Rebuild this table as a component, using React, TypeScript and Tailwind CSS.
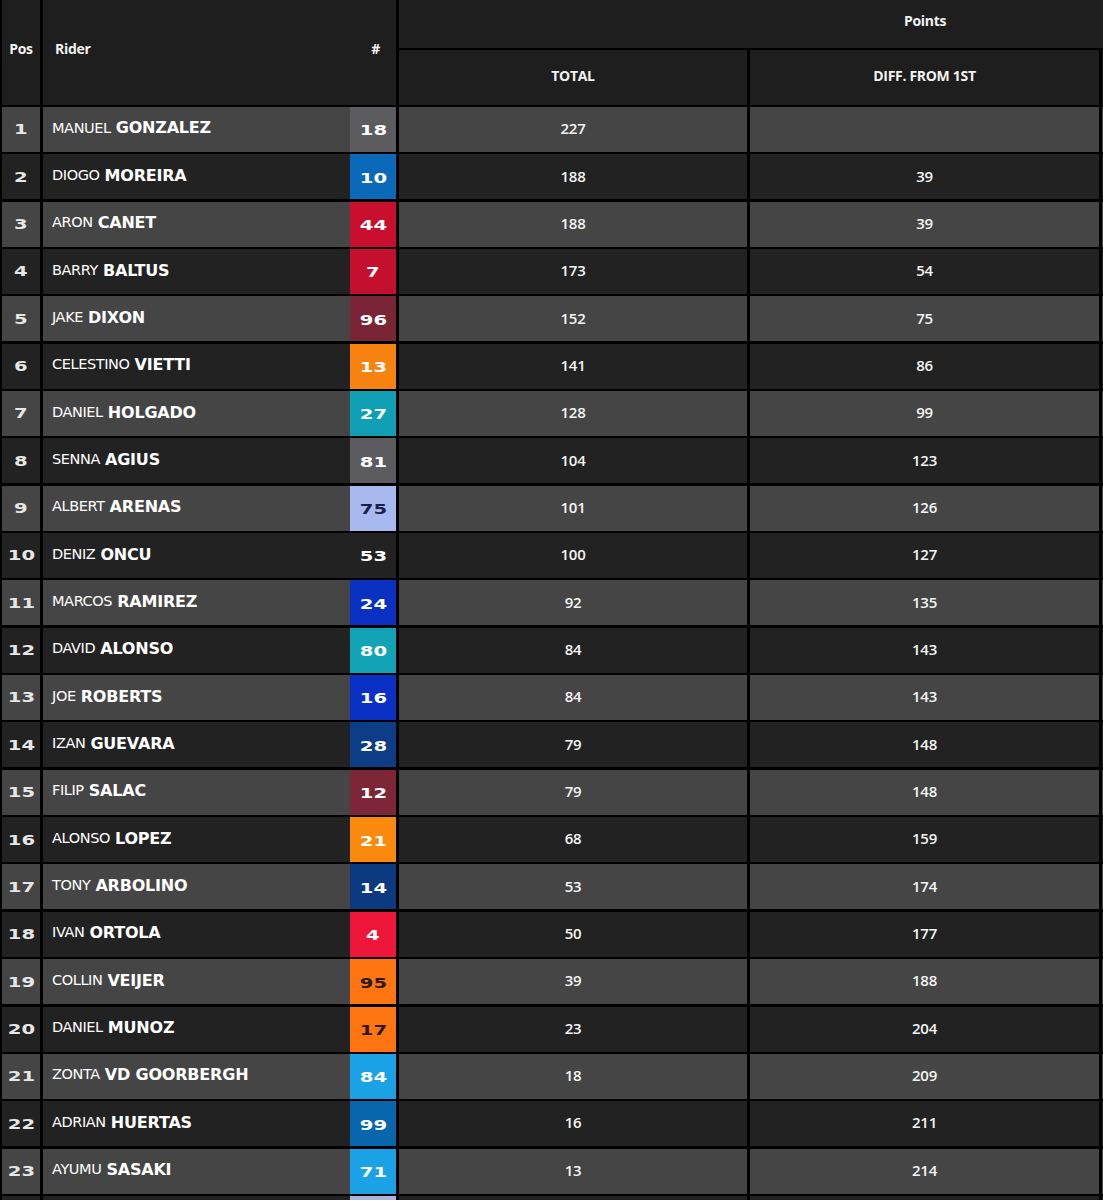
const riders = [
  { pos: 1, first: "MANUEL", last: "GONZALEZ", num: "18", box: "bg-[#5b5b60]", ink: "text-white", total: 227, diff: "" },
  { pos: 2, first: "DIOGO", last: "MOREIRA", num: "10", box: "bg-[#0a69b8]", ink: "text-white", total: 188, diff: "39" },
  { pos: 3, first: "ARON", last: "CANET", num: "44", box: "bg-[#c8102e]", ink: "text-white", total: 188, diff: "39" },
  { pos: 4, first: "BARRY", last: "BALTUS", num: "7", box: "bg-[#c40f2e]", ink: "text-white", total: 173, diff: "54" },
  { pos: 5, first: "JAKE", last: "DIXON", num: "96", box: "bg-[#7a2535]", ink: "text-white", total: 152, diff: "75" },
  { pos: 6, first: "CELESTINO", last: "VIETTI", num: "13", box: "bg-[#f8820f]", ink: "text-white", total: 141, diff: "86" },
  { pos: 7, first: "DANIEL", last: "HOLGADO", num: "27", box: "bg-[#0fa0b5]", ink: "text-white", total: 128, diff: "99" },
  { pos: 8, first: "SENNA", last: "AGIUS", num: "81", box: "bg-[#5c5c60]", ink: "text-white", total: 104, diff: "123" },
  { pos: 9, first: "ALBERT", last: "ARENAS", num: "75", box: "bg-[#a8b9f0]", ink: "text-[#18214a]", total: 101, diff: "126" },
  { pos: 10, first: "DENIZ", last: "ONCU", num: "53", box: "", ink: "text-white", total: 100, diff: "127" },
  { pos: 11, first: "MARCOS", last: "RAMIREZ", num: "24", box: "bg-[#0a31c2]", ink: "text-white", total: 92, diff: "135" },
  { pos: 12, first: "DAVID", last: "ALONSO", num: "80", box: "bg-[#13a3b7]", ink: "text-white", total: 84, diff: "143" },
  { pos: 13, first: "JOE", last: "ROBERTS", num: "16", box: "bg-[#0b30c4]", ink: "text-white", total: 84, diff: "143" },
  { pos: 14, first: "IZAN", last: "GUEVARA", num: "28", box: "bg-[#0c3d86]", ink: "text-white", total: 79, diff: "148" },
  { pos: 15, first: "FILIP", last: "SALAC", num: "12", box: "bg-[#7c2637]", ink: "text-white", total: 79, diff: "148" },
  { pos: 16, first: "ALONSO", last: "LOPEZ", num: "21", box: "bg-[#fa8a0e]", ink: "text-white", total: 68, diff: "159" },
  { pos: 17, first: "TONY", last: "ARBOLINO", num: "14", box: "bg-[#0b3a80]", ink: "text-white", total: 53, diff: "174" },
  { pos: 18, first: "IVAN", last: "ORTOLA", num: "4", box: "bg-[#ee1639]", ink: "text-white", total: 50, diff: "177" },
  { pos: 19, first: "COLLIN", last: "VEIJER", num: "95", box: "bg-[#ff7512]", ink: "text-[#2a1a12]", total: 39, diff: "188" },
  { pos: 20, first: "DANIEL", last: "MUNOZ", num: "17", box: "bg-[#ff7512]", ink: "text-[#2a1a12]", total: 23, diff: "204" },
  { pos: 21, first: "ZONTA", last: "VD GOORBERGH", num: "84", box: "bg-[#1ba2e6]", ink: "text-white", total: 18, diff: "209" },
  { pos: 22, first: "ADRIAN", last: "HUERTAS", num: "99", box: "bg-[#0866ad]", ink: "text-white", total: 16, diff: "211" },
  { pos: 23, first: "AYUMU", last: "SASAKI", num: "71", box: "bg-[#1ba2e6]", ink: "text-white", total: 13, diff: "214" },
];

const head = "font-['Open_Sans',sans-serif] font-bold text-[14px] tracking-[-0.3px] text-[#f2f2f2]";
const wide = "inline-block font-['DejaVu_Sans',sans-serif] font-bold text-[13.5px] scale-x-[1.45]";
const pts = "font-['Open_Sans',sans-serif] font-semibold text-[15px] tracking-[-0.3px] text-[#f4f4f4]";

export default function App() {
  return (
    <div className="min-h-screen w-full overflow-hidden bg-black">
      {/* the points group runs on past the window's right edge */}
      <div className="grid w-[1460px] grid-cols-[38px_353px_348px_349px_349px] gap-x-[3px] gap-y-[2.35px] pl-[2px]">
        <div className={`row-span-2 flex items-center justify-center bg-[#1e1e1e] pb-2 ${head}`}>Pos</div>
        <div className={`row-span-2 flex items-center justify-between bg-[#1e1e1e] pb-2 pl-[12px] pr-[16px] ${head}`}>
          <span>Rider</span>
          <span>#</span>
        </div>
        <div className={`col-span-3 flex h-[48px] items-center justify-center bg-[#1e1e1e] pb-2 ${head}`}>Points</div>
        <div className={`flex h-[54.3px] items-center justify-center bg-[#1e1e1e] pb-1 ${head}`}>TOTAL</div>
        <div className={`flex h-[54.3px] items-center justify-center bg-[#1e1e1e] pb-1 ${head}`}>DIFF. FROM 1ST</div>
        <div className="h-[54.3px] bg-[#1e1e1e]" />

        {riders.map((r, i) => {
          const bg = i % 2 === 0 ? "bg-[#454545]" : "bg-[#222222]";
          return (
            <div key={r.pos} className="contents">
              <div className={`flex h-[45px] items-center justify-center ${bg}`}>
                <span className={`${wide} text-[#e6e6e6]`}>{r.pos}</span>
              </div>
              <div className={`flex h-[45px] items-stretch ${bg}`}>
                <div className="flex flex-1 items-center gap-[5px] pl-[9px] pb-[2px] text-white">
                  <span className="font-['DejaVu_Sans',sans-serif] text-[14.5px] tracking-[-0.4px]">{r.first}</span>
                  <span className="font-['DejaVu_Sans',sans-serif] text-[16px] font-bold tracking-[-0.2px]">{r.last}</span>
                </div>
                <div className={`flex w-[46px] items-center justify-center pt-[2px] ${r.box}`}>
                  <span className={`${wide} ${r.ink}`}>{r.num}</span>
                </div>
              </div>
              <div className={`flex h-[45px] items-center justify-center pb-[2px] ${bg} ${pts}`}>{r.total}</div>
              <div className={`flex h-[45px] items-center justify-center pb-[2px] ${bg} ${pts}`}>{r.diff}</div>
              <div className={`h-[45px] ${bg}`} />
            </div>
          );
        })}

        {/* next row, only its top edge shows at the bottom of the window */}
        <div className="h-[45px] bg-[#222222]" />
        <div className="flex h-[45px] justify-end bg-[#222222]">
          <div className="w-[46px] bg-[#a9b6d8]" />
        </div>
        <div className="h-[45px] bg-[#222222]" />
        <div className="h-[45px] bg-[#222222]" />
        <div className="h-[45px] bg-[#222222]" />
      </div>
    </div>
  );
}
